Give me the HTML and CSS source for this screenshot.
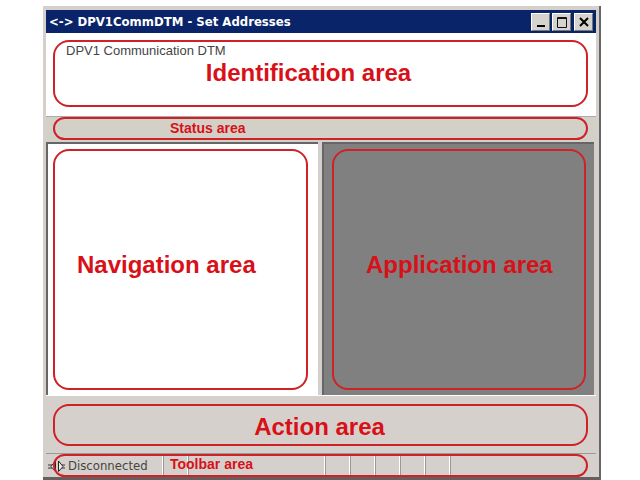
FILE: index.html
```
<!DOCTYPE html>
<html lang="en">
<head>
<meta charset="UTF-8" />
<meta name="viewport" content="width=device-width, initial-scale=1" />
<title>DPV1CommDTM - Set Addresses</title>
<link rel="stylesheet" href="styles.css">
</head>
<body>
<div class="window">
  <header class="titlebar">
    <h1>&lt;-&gt; DPV1CommDTM - Set Addresses</h1>
    <div class="window-buttons">
      <button type="button" aria-label="Minimize">
        <svg width="16" height="16" viewBox="0 0 16 16"><path d="M4 12h8" stroke="#000" stroke-width="2" /></svg>
      </button>
      <button type="button" aria-label="Maximize">
        <svg width="16" height="16" viewBox="0 0 16 16"><path d="M3.500 3.500h9v10h-9zM3 4.500h10" fill="none" stroke="#111" /></svg>
      </button>
      <button type="button" class="close" aria-label="Close">
        <svg width="16" height="16" viewBox="0 0 16 16"><path d="M4 4l8 8M12 4l-8 8" stroke="#000" stroke-width="2" /></svg>
      </button>
    </div>
  </header>

  <section class="identification">
    <div class="frame">
      <p>DPV1 Communication DTM</p>
      <h2>Identification area</h2>
    </div>
  </section>

  <section class="status">
    <div class="frame"><h3>Status area</h3></div>
  </section>

  <main class="panes">
    <section class="navigation">
      <div class="frame"><h2>Navigation area</h2></div>
    </section>
    <section class="application">
      <div class="frame"><h2>Application area</h2></div>
    </section>
  </main>

  <section class="action">
    <div class="frame"><h2>Action area</h2></div>
  </section>

  <footer class="toolbar">
    <div class="cell state">
      <svg width="18" height="12" viewBox="0 0 18 12"><path d="M0 5h4M0 8h4M14 5h3M14 8h3" stroke="#333" /><path d="M7.500 1L3 6.500l4.500 5zM10.500 1l4.500 5.500-4.500 5z" fill="#eee" stroke="#222" /></svg>
      <span>Disconnected</span>
    </div>
    <div class="cell"></div>
    <div class="cell wide"></div>
    <div class="cell"></div>
    <div class="cell"></div>
    <div class="cell"></div>
    <div class="cell"></div>
    <div class="cell"></div>
    <div class="cell rest"></div>
    <div class="frame toolbar-frame"><h3>Toolbar area</h3></div>
  </footer>
</div>
</body>
</html>
```
FILE: styles.css
```
* {
  box-sizing: border-box;
}
body {
  margin: 0;
  height: 100vh;
  padding: 6px 39px 0 43px;
  background: #fff;
  font-family: "Liberation Sans", Arial, sans-serif;
}
h1, h2, h3, p {
  margin: 0;
}
h2 {
  font-size: 24px;
  line-height: 28px;
  color: #d81018;
}
h3 {
  font-size: 14px;
  line-height: 16px;
  color: #d81018;
}
.window {
  display: flex;
  flex-direction: column;
  height: 100%;
  padding: 4px 3px 0;
  background: #d6d0cc;
  border-right: 2px solid #666;
  border-bottom: 3px solid #665f5f;
}
.frame {
  border: 2px solid #cf2128;
  border-radius: 16px;
}

/* title bar */
.titlebar {
  display: flex;
  align-items: center;
  justify-content: space-between;
  height: 23px;
  padding: 0 3px;
  background: #0a246a;
}
.titlebar h1 {
  font-family: "DejaVu Sans Condensed", "Noto Sans", sans-serif;
  font-size: 13px;
  color: #fff;
}
.window-buttons {
  display: flex;
  gap: 2px;
}
.window-buttons button {
  display: flex;
  align-items: center;
  justify-content: center;
  width: 19px;
  height: 18px;
  padding: 0;
  background: #d6d3ce;
  border: 1px solid;
  border-color: #fff #777 #777 #fff;
}
.window-buttons .close {
  margin-left: 1px;
}

.identification {
  height: 83px;
  padding: 7px 8px 0 7px;
  background: #fff;
}
.identification .frame {
  height: 67px;
  padding: 1px 11px;
}
.identification p {
  font-size: 13px;
  line-height: 16px;
  color: #444;
}
.identification h2 {
  padding-right: 24px;
  text-align: center;
}

.status {
  height: 26px;
  padding: 0 8px 0 7px;
  background: #d3d0c8;
  border-top: 1px solid #aaa;
}
.status .frame {
  height: 23px;
  padding: 1px 115px;
}

/* work area */
.panes {
  flex: 1;
  display: grid;
  grid-template-columns: 1fr 1fr;
  gap: 4px;
  padding-right: 2px;
  border-bottom: 1px solid #fff;
}
.navigation, .application {
  display: flex;
  padding: 5px 10px 5px 5px;
  border-top: 2px solid #666;
  border-left: 2px solid #666;
  background: #fff;
}
.application {
  padding: 5px 8px;
  background: #808080;
}
.panes .frame {
  flex: 1;
  display: flex;
  align-items: center;
  padding: 0 22px 10px;
}
.application .frame {
  padding-left: 32px;
}

.action {
  padding: 8px 8px 7px 7px;
}
.action .frame {
  display: flex;
  align-items: center;
  justify-content: center;
  height: 42px;
  padding: 4px 2px 0 0;
}

/* bottom bar */
.toolbar {
  position: relative;
  display: flex;
  height: 24px;
  border-top: 1px solid #999;
}
.cell {
  width: 25px;
  border-right: 1px solid #999;
  box-shadow: inset -1px 0 #fff;
}
.state {
  display: flex;
  align-items: center;
  gap: 2px;
  width: 118px;
  padding-left: 2px;
  font-family: "DejaVu Sans Condensed", "Noto Sans", sans-serif;
  font-size: 13px;
  color: #444;
}
.wide {
  width: 137px;
}
.rest {
  flex: 1;
  border: none;
  box-shadow: none;
}
.toolbar-frame {
  position: absolute;
  inset: 0 8px 0 7px;
  padding: 0 115px;
}
```
